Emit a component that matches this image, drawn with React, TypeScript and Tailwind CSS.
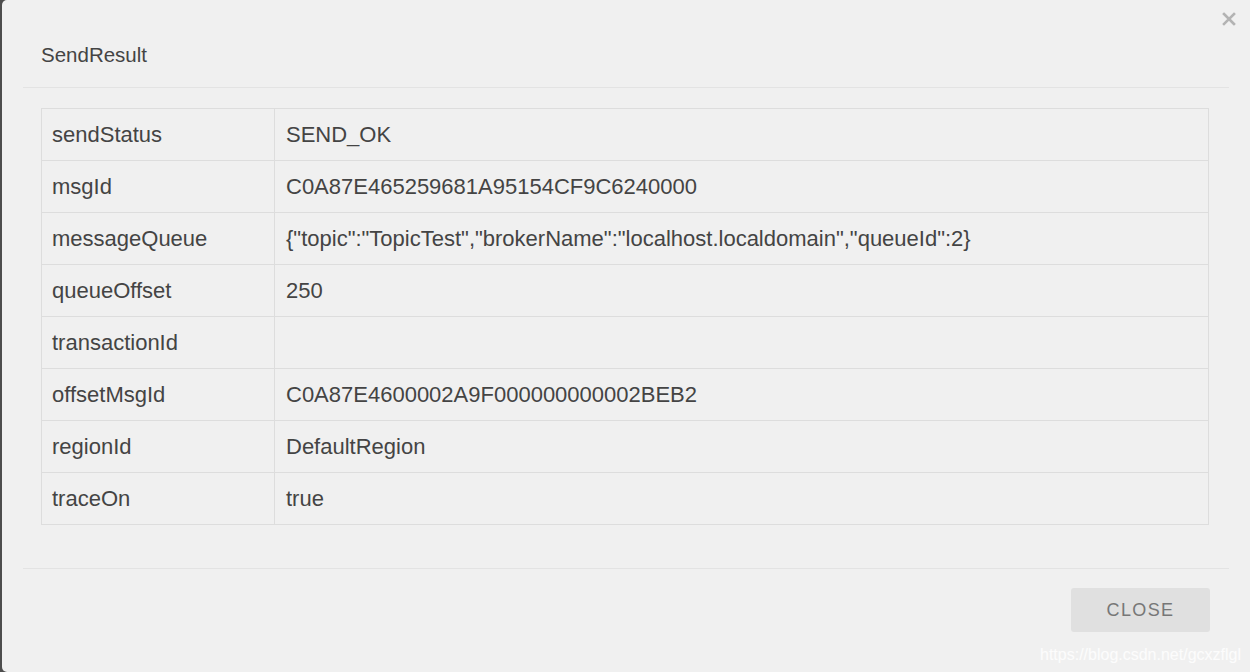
import React from "react";

const rows: [string, string][] = [
  ["sendStatus", "SEND_OK"],
  ["msgId", "C0A87E465259681A95154CF9C6240000"],
  ["messageQueue", '{"topic":"TopicTest","brokerName":"localhost.localdomain","queueId":2}'],
  ["queueOffset", "250"],
  ["transactionId", ""],
  ["offsetMsgId", "C0A87E4600002A9F000000000002BEB2"],
  ["regionId", "DefaultRegion"],
  ["traceOn", "true"],
];

export default function App() {
  return (
    <div
      className="w-[1250px] h-[672px] bg-[#4d4d4d] flex overflow-hidden"
      style={{ fontFamily: '"Liberation Sans", Arial, sans-serif' }}
    >
      <div className="ml-[2px] flex-1 bg-[#f0f0f0] rounded-l-[5px] relative flex flex-col">
        <button className="absolute right-[14px] top-[12px] w-[14px] h-[14px]">
          <svg width="14" height="14" viewBox="0 0 14 14">
            <path d="M2 2L12 12M12 2L2 12" stroke="#b3b3b3" strokeWidth="2.6" strokeLinecap="square" />
          </svg>
        </button>
        <div className="mx-[21px] h-[88px] border-b border-[#e3e3e3] pl-[18px] pt-[43px]">
          <div className="text-[20.5px] leading-[24px] text-[#444]">SendResult</div>
        </div>
        <div className="ml-[39px] mt-[20px] w-[1168px]">
          <table className="w-full border-collapse text-[22px] text-[#444]">
            <tbody>
              {rows.map(([k, v]) => (
                <tr key={k} className="h-[52px]">
                  <td className="border border-[#dddddd] w-[233px] pl-[10px] align-middle">{k}</td>
                  <td className="border border-[#dddddd] pl-[11px] align-middle">{v}</td>
                </tr>
              ))}
            </tbody>
          </table>
        </div>
        <div className="mx-[21px] mt-[43px] border-t border-[#e3e3e3]" />
        <div className="flex justify-end pr-[40px] pt-[19px]">
          <button className="w-[139px] h-[44px] bg-[#e0e0e0] rounded-[3px] text-[18px] tracking-[1.4px] text-[#777]">
            CLOSE
          </button>
        </div>
        <div className="absolute right-[9px] bottom-[9px] text-[16px] text-white/80 leading-none">
          https://blog.csdn.net/gcxzflgl
        </div>
      </div>
    </div>
  );
}
